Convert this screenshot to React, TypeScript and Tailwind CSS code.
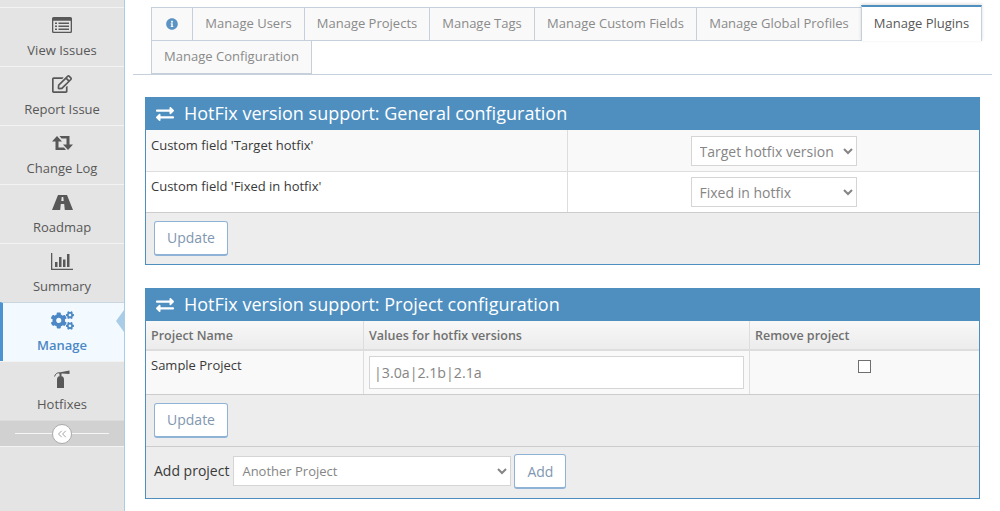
import {
  FaCogs,
  FaExchangeAlt,
  FaInfoCircle,
  FaRegEdit,
} from "react-icons/fa";
import { ChevronsLeft } from "lucide-react";

const ListIcon = () => (
  <svg width="20" height="16" viewBox="0 0 20 16" fill="currentColor">
    <path
      fillRule="evenodd"
      d="M1.5 0h17A1.5 1.5 0 0 1 20 1.500v13a1.500 1.500 0 0 1-1.500 1.500h-17A1.500 1.500 0 0 1 0 14.500v-13A1.500 1.500 0 0 1 1.500 0ZM1.300 3.800v10.500c0 .3.200.4.400.4h16.600c.2 0 .4-.1.400-.4V3.800Z"
    />
    <path d="M3 5.500h2v1.500H3ZM6.500 5.500H17v1.500H6.500ZM3 8.500h2V10H3ZM6.500 8.500H17V10H6.500ZM3 11.500h2V13H3ZM6.500 11.500H17V13H6.500Z" />
  </svg>
);

const RetweetIcon = () => (
  <svg width="21" height="14" viewBox="0 0 21 14" fill="currentColor">
    <path d="M5 0l5 5.500H6.500v6H12l2 2.500H3.500V5.500H0Z" />
    <path d="M7.500 0h10v8.500H21L16 14l-5-5.500h3.500v-6h-5Z" />
  </svg>
);

const RoadIcon = () => (
  <svg width="21" height="15" viewBox="0 0 21 15" fill="currentColor">
    <path
      fillRule="evenodd"
      d="M6 0h9l6 15H0ZM9.700 2l-.4 4h2.400l-.4-4ZM8.800 9 8.200 15h4.600l-.6-6Z"
    />
  </svg>
);

const ChartIcon = () => (
  <svg width="22" height="17" viewBox="0 0 22 17" fill="currentColor">
    <path d="M0 0h1.300v15.700H22V17H0Z" />
    <path d="M4 9h2.500v5H4ZM8 4h2.500v10H8ZM12 6.500h2.500V14H12ZM16 1h2.500v13H16Z" />
  </svg>
);

const ExtinguisherIcon = () => (
  <svg width="16" height="18" viewBox="0 0 16 18" fill="currentColor">
    <path d="M3 18V9.500C3 7 4.500 6 6.500 6S10 7 10 9.500V18Z" />
    <path d="M5.500 3.500h2V6h-2ZM5 2.500 15.500.500V4L8 3.500H5Z" />
    <path d="M5.500 2.700C3 2.700 1.200 4 .6 6.500" fill="none" stroke="currentColor" />
  </svg>
);

const navItems = [
  { id: 1, icon: <ListIcon />, title: "View Issues" },
  { id: 2, icon: <FaRegEdit size={20} />, title: "Report Issue" },
  { id: 3, icon: <RetweetIcon />, title: "Change Log" },
  { id: 4, icon: <RoadIcon />, title: "Roadmap" },
  { id: 5, icon: <ChartIcon />, title: "Summary" },
  { id: 6, icon: <FaCogs size={23} />, title: "Manage", active: true },
  { id: 7, icon: <ExtinguisherIcon />, title: "Hotfixes" },
];

const tabs = [
  { title: "Manage Users", width: "w-[113px]" },
  { title: "Manage Projects", width: "w-[126px]" },
  { title: "Manage Tags", width: "w-[106px]" },
  { title: "Manage Custom Fields", width: "w-[163px]" },
  { title: "Manage Global Profiles", width: "w-[166px]" },
];

const NavItem = ({
  icon,
  title,
  active,
}: {
  icon: React.ReactNode;
  title: string;
  active?: boolean;
}) => {
  if (active) {
    return (
      <div className="relative flex h-[59px] flex-col items-center border-t border-[#c9d6e0] border-l-[3px] border-l-[#4b94d1] bg-[#f3faff] pt-[6px] pr-[3px] font-semibold text-[#4b88c5]">
        <div className="flex h-[22px] items-center">{icon}</div>
        <p className="mt-[5px] leading-[18px]">{title}</p>
        <span className="absolute top-[7px] right-0 h-0 w-0 border-y-[11px] border-r-[8px] border-y-transparent border-r-[#a9cde6]" />
      </div>
    );
  }
  return (
    <div className="flex h-[59px] flex-col items-center border-t border-[#f3f3f3] pt-[6px] text-[#585858]">
      <div className="flex h-[22px] items-center">{icon}</div>
      <p className="mt-[5px] leading-[18px]">{title}</p>
    </div>
  );
};

const Sidebar = () => {
  return (
    <aside className="flex h-[511px] w-[125px] shrink-0 flex-col border-r border-[#a9cde6] bg-[#e4e4e4] pt-[7px]">
      {navItems.map((item) => (
        <NavItem
          key={item.id}
          icon={item.icon}
          title={item.title}
          active={item.active}
        />
      ))}
      <div className="relative flex h-[27px] items-center justify-center border-t border-[#dcdcdc] border-b border-b-[#f3f3f3] bg-[#d1d1d1]">
        <div className="h-px w-[94px] bg-[#f5f5f5]" />
        <div className="absolute flex h-[20px] w-[20px] items-center justify-center rounded-full border border-[#aaaaaa] bg-white text-[#969696]">
          <ChevronsLeft size={14} strokeWidth={1.5} />
        </div>
      </div>
    </aside>
  );
};

const Tab = ({
  children,
  className,
}: {
  children: React.ReactNode;
  className?: string;
}) => {
  return (
    <div
      className={`${className} -mr-px flex h-[34px] items-center justify-center border border-[#c5d0dc] bg-[#f9f9f9] text-[#8a8a8a]`}
    >
      {children}
    </div>
  );
};

const Tabs = () => {
  return (
    <div className="ml-[8px] h-[75px] border-b border-[#c5d0dc] pt-[7px] pl-[18px]">
      <div className="flex h-[34px]">
        <Tab className="w-[42px] text-[#4f8fc0]">
          <FaInfoCircle size={12} className="text-[#5b93c5]" />
        </Tab>
        {tabs.map((tab) => (
          <Tab key={tab.title} className={tab.width}>
            {tab.title}
          </Tab>
        ))}
        <div className="-mt-[2px] flex h-[36px] w-[121px] items-center justify-center border-x border-t-2 border-x-[#c5d0dc] border-t-[#4f8fc0] bg-white text-[#585858] shadow-[0_-1px_3px_rgba(0,0,0,0.15)]">
          Manage Plugins
        </div>
      </div>
      <Tab className="-mt-px w-[161px]">Manage Configuration</Tab>
    </div>
  );
};

const PanelHeader = ({ title }: { title: string }) => {
  return (
    <div className="flex h-[33px] items-center bg-[#4f8fc0] pl-[10px] text-[18px] text-white">
      <FaExchangeAlt size={18} />
      <h4 className="ml-[10px] leading-[33px]">{title}</h4>
    </div>
  );
};

const UpdateButton = ({
  label = "Update",
  className,
}: {
  label?: string;
  className?: string;
}) => {
  return (
    <button
      className={`${className ?? "h-[35px] w-[74px] pb-[2px]"} rounded-[3px] border border-b-2 border-[#8fb3d6] bg-white text-[14px] text-[#7f97b0]`}
    >
      {label}
    </button>
  );
};

const FieldRow = ({
  label,
  value,
  className,
  cellClass,
}: {
  label: string;
  value: string;
  className: string;
  cellClass: string;
}) => {
  return (
    <div className={`${className} flex`}>
      <div
        className={`${cellClass} w-[422px] border-r border-[#dddddd] pl-[5px] leading-[18px] text-[#393939]`}
      >
        {label}
      </div>
      <div className={`${cellClass} flex flex-1 justify-center`}>
        <select
          defaultValue={value}
          className="h-[30px] w-[166px] border border-[#d5d5d5] bg-white pl-[4px] text-[14px] text-[#858585]"
        >
          <option>{value}</option>
        </select>
      </div>
    </div>
  );
};

const HeadCell = ({
  title,
  className,
}: {
  title: string;
  className?: string;
}) => {
  return (
    <div
      className={`${className} border-[#dddddd] pt-[6px] pl-[5px] text-[12.5px] leading-[18px] font-semibold text-[#707070]`}
    >
      {title}
    </div>
  );
};

const App = () => {
  return (
    <div className="flex h-[511px] overflow-hidden bg-white font-['Open_Sans',sans-serif] text-[13px]">
      <Sidebar />
      <main className="w-[867px]">
        <Tabs />
        <div className="mt-[22px] ml-[20px] w-[835px]">
          <section className="border-x border-b border-[#4f8fc0]">
            <PanelHeader title="HotFix version support: General configuration" />
            <FieldRow
              label="Custom field 'Target hotfix'"
              value="Target hotfix version"
              className="h-[42px] border-b border-[#dddddd] bg-[#f9f9f9]"
              cellClass="pt-[6px]"
            />
            <FieldRow
              label="Custom field 'Fixed in hotfix'"
              value="Fixed in hotfix"
              className="h-[40px] bg-white"
              cellClass="pt-[5px]"
            />
            <div className="h-[52px] border-t border-[#cccccc] bg-[#ededed] pt-[8px] pl-[8px]">
              <UpdateButton />
            </div>
          </section>

          <section className="mt-[23px] border-x border-b border-[#4f8fc0]">
            <PanelHeader title="HotFix version support: Project configuration" />
            <div className="flex h-[30px] border-b-2 border-[#dddddd] bg-gradient-to-b from-[#f8f8f8] to-[#ececec]">
              <HeadCell title="Project Name" className="w-[218px] border-r" />
              <HeadCell
                title="Values for hotfix versions"
                className="w-[386px] border-r"
              />
              <HeadCell title="Remove project" className="flex-1" />
            </div>
            <div className="flex h-[43px] bg-[#f9f9f9]">
              <div className="w-[218px] border-r border-[#dddddd] pt-[5px] pl-[5px] leading-[18px] text-[#393939]">
                Sample Project
              </div>
              <div className="w-[386px] border-r border-[#dddddd] pt-[5px] pl-[5px]">
                <input
                  readOnly
                  value="|3.0a|2.1b|2.1a"
                  className="h-[33px] w-[375px] border border-[#d5d5d5] bg-white pl-[4px] text-[14.2px] text-[#858585]"
                />
              </div>
              <div className="flex flex-1 justify-center pt-[9px]">
                <input
                  type="checkbox"
                  readOnly
                  className="h-[13px] w-[13px] appearance-none border border-[#6f6f6f] bg-white"
                />
              </div>
            </div>
            <div className="h-[52px] border-t border-[#cccccc] bg-[#ededed] pt-[8px] pl-[8px]">
              <UpdateButton />
            </div>
            <div className="flex h-[52px] items-start border-t border-[#cccccc] bg-[#ededed] pl-[8px] text-[14px] text-[#393939]">
              <span className="mt-[14px] leading-[19px]">Add project</span>
              <select
                defaultValue="Another Project"
                className="mt-[9px] ml-[4px] h-[30px] w-[278px] border border-[#d5d5d5] bg-white pl-[4px] text-[13px] text-[#858585]"
              >
                <option>Another Project</option>
              </select>
              <UpdateButton
                label="Add"
                className="mt-[7px] ml-[3px] h-[35px] w-[52px]"
              />
            </div>
          </section>
        </div>
      </main>
    </div>
  );
};

export default App;
